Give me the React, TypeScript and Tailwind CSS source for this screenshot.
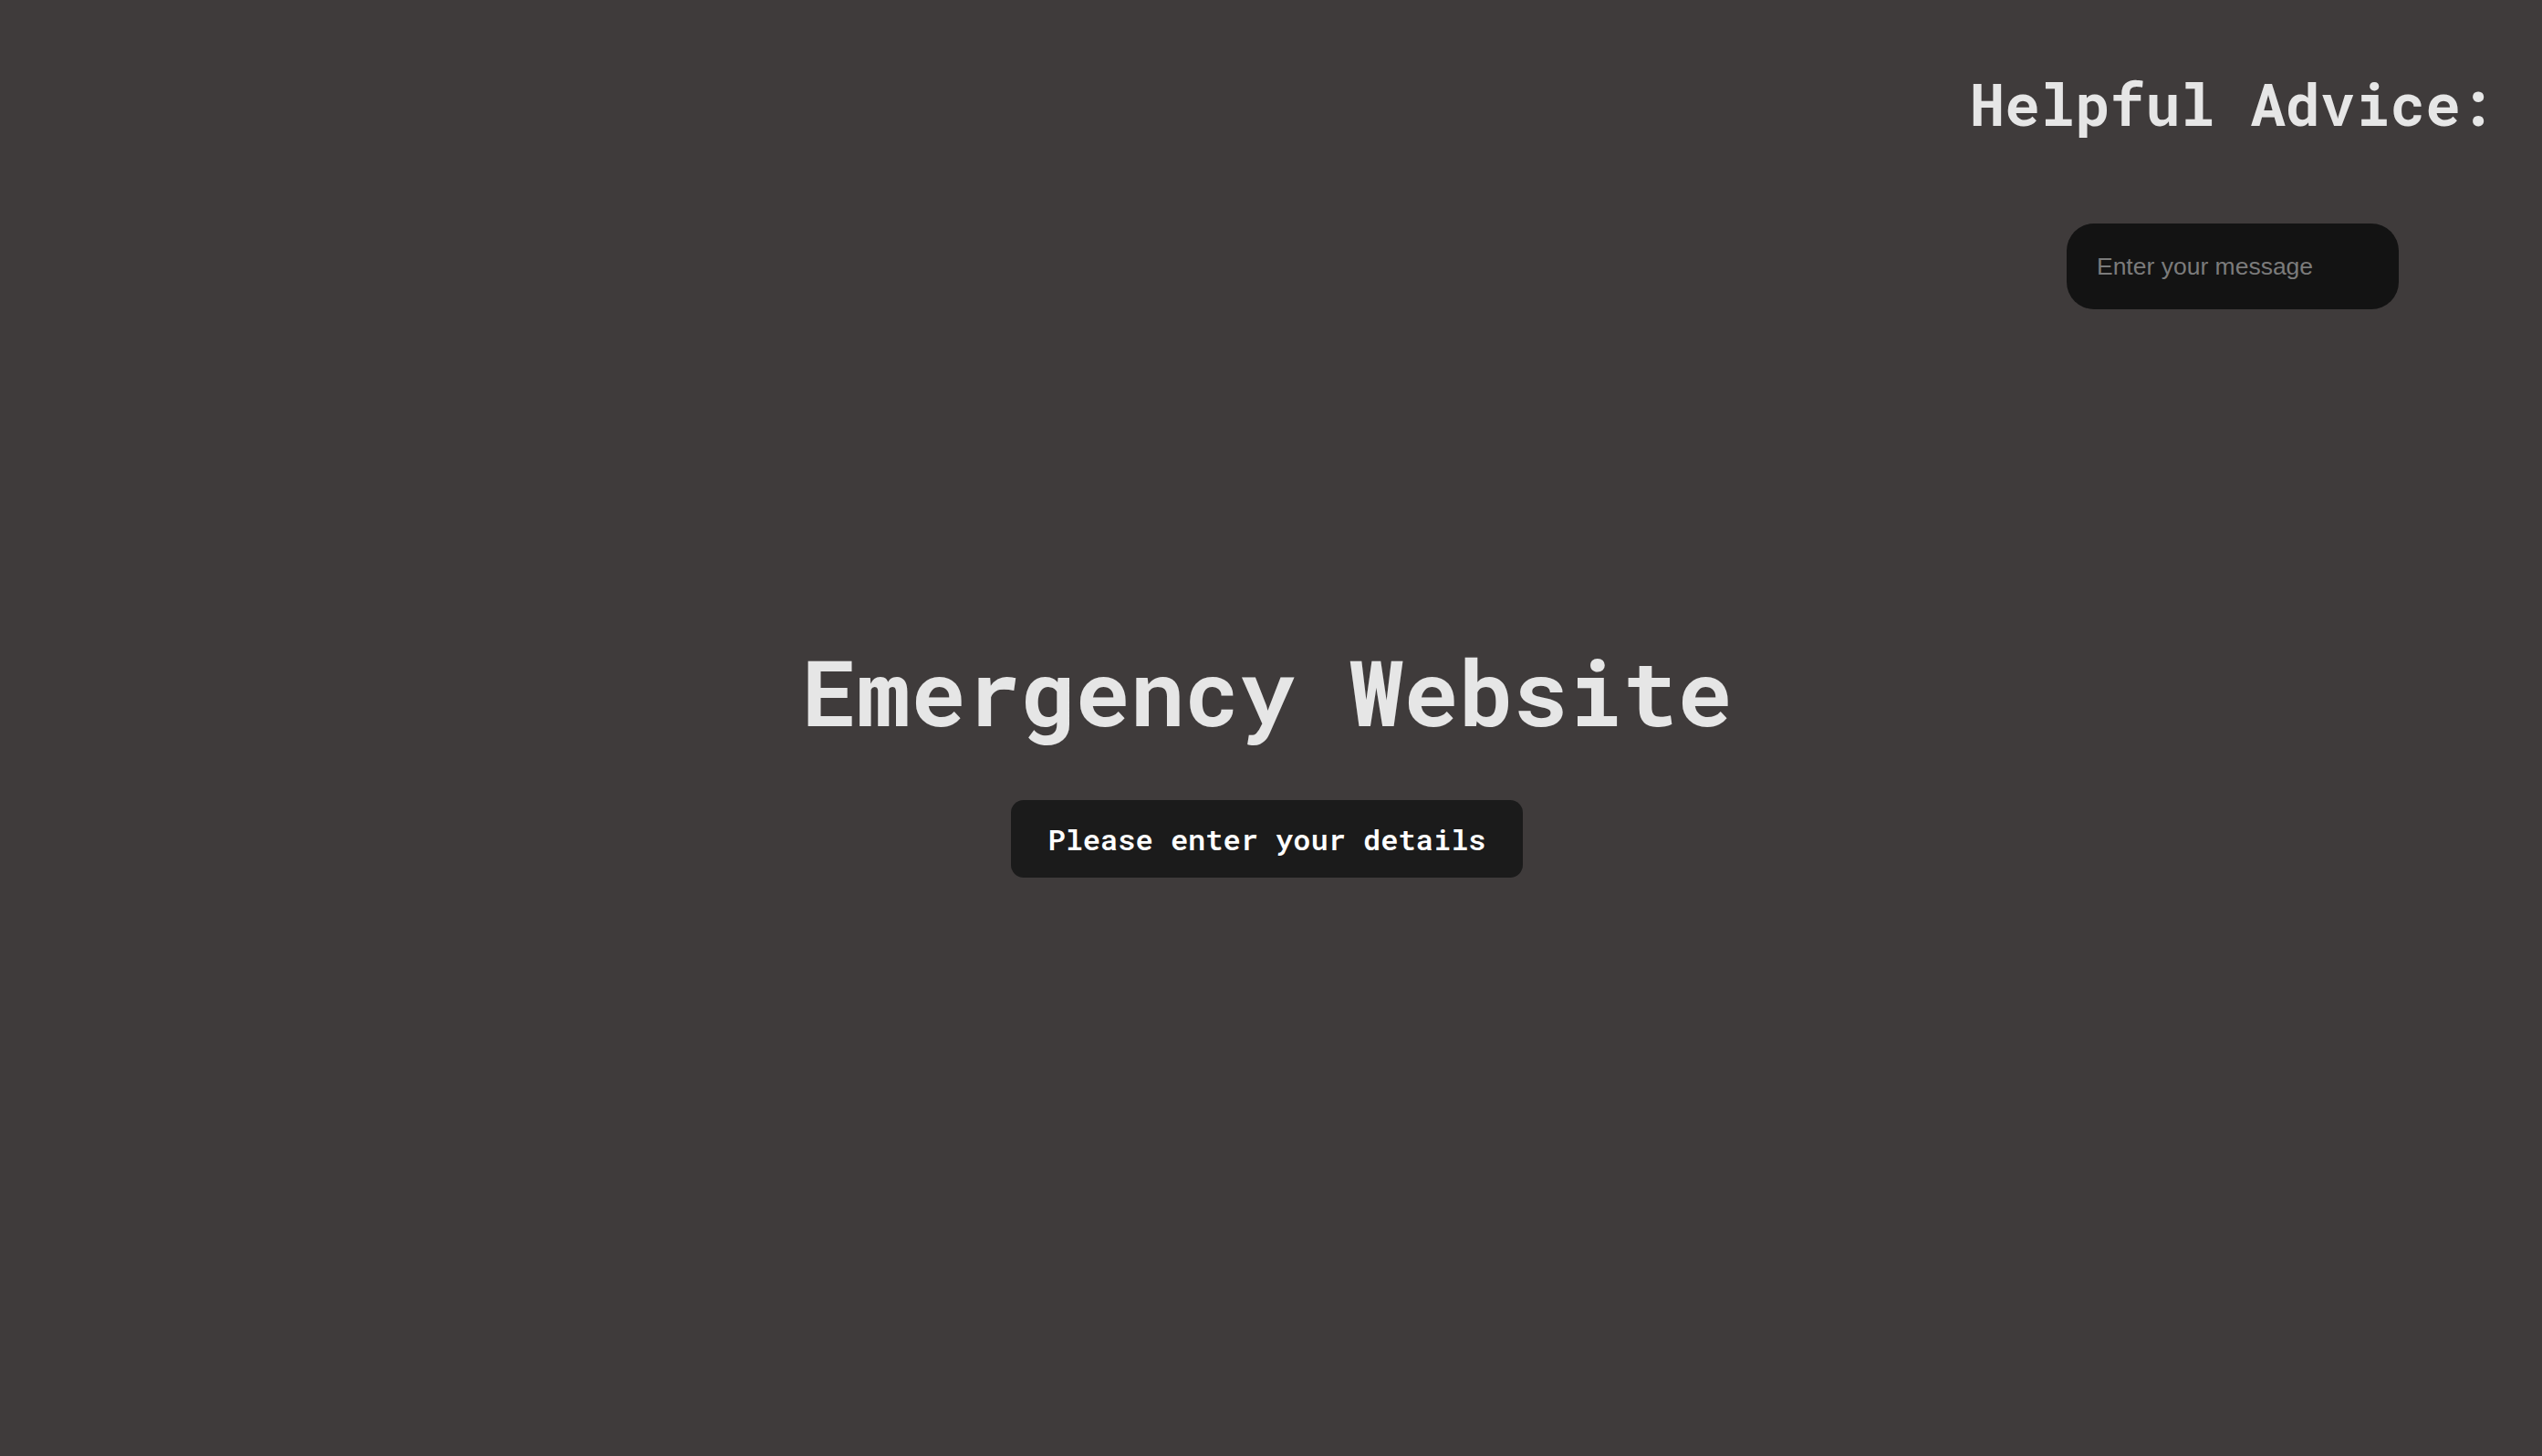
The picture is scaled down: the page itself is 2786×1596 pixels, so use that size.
import React from 'react';

const mono = "font-['Roboto_Mono','DejaVu_Sans_Mono',monospace]";

const AdvicePanel: React.FC = () => {
  return (
    <aside className="flex flex-col items-center">
      <h2 className={`${mono} text-[64px] leading-none font-bold text-[#e6e6e6]`}>
        Helpful Advice:
      </h2>
      <input
        type="text"
        placeholder="Enter your message"
        className="mt-[100px] w-[364px] h-[94px] rounded-[30px] bg-[#131313] px-[33px] text-[26.5px] text-[#e6e6e6] placeholder:text-[#7b7b7b] font-['Liberation_Sans',Arial,sans-serif] outline-none"
      />
    </aside>
  );
};

export default function App() {
  return (
    <div className="min-h-screen w-full bg-[#3f3b3b] flex flex-col">
      <div className="flex justify-end pt-[81px] pr-[51px]">
        <AdvicePanel />
      </div>
      <main className="flex flex-col items-center pt-[368px] pr-[9px]">
        <h1 className={`${mono} text-[100px] leading-none font-bold text-[#e6e6e6]`}>
          Emergency Website
        </h1>
        <button className={`${mono} mt-[70px] w-[561px] h-[85px] rounded-[14px] bg-[#1b1b1b] text-white text-[32px] font-semibold`}>
          Please enter your details
        </button>
      </main>
    </div>
  );
}
